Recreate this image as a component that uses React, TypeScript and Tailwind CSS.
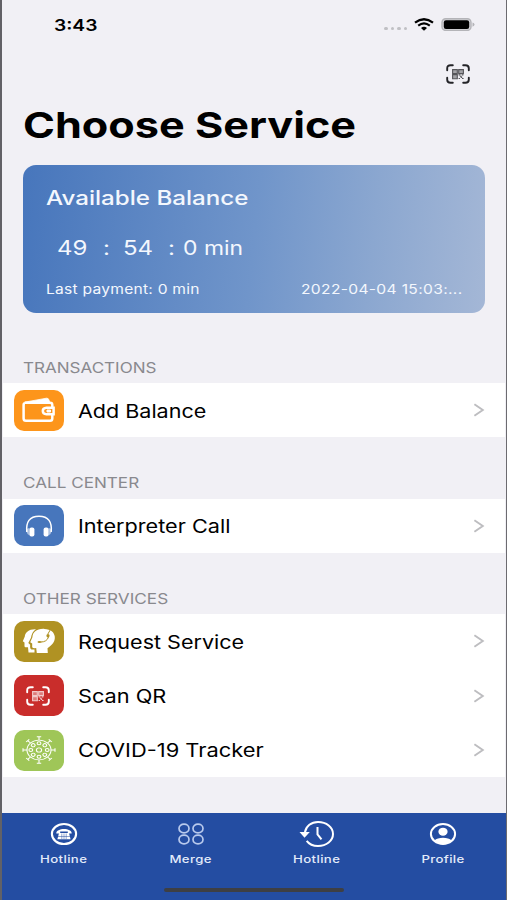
import type { ReactNode } from "react";

interface WideTextProps {
  children: ReactNode;
  className?: string;
}

// The whole screen uses slightly extended lettering
function WideText({ children, className = "" }: WideTextProps) {
  return (
    <span className={`block w-max origin-left whitespace-pre ${className}`}>
      {children}
    </span>
  );
}

function QrIcon({ className = "" }: { className?: string }) {
  return (
    <svg viewBox="0 0 24 20" fill="none" stroke="currentColor" className={className}>
      <path
        d="M1.2 6.2V4.2Q1.2 1.2 4.6 1.2H6.8M17.2 1.2H19.4Q22.8 1.2 22.8 4.2V6.2M22.8 13.8V15.8Q22.8 18.8 19.4 18.8H17.2M6.8 18.8H4.6Q1.2 18.8 1.2 15.8V13.8"
        strokeWidth="1.9"
        strokeLinecap="round"
      />
      <g strokeWidth="1.1" opacity="0.75">
        <path d="M6.6 5.6H11.3V9.6H6.6ZM12.7 5.6H17.4V9.6H12.7ZM6.6 10.8H11.3V14.7H6.6Z" fill="currentColor" fillOpacity="0.5" />
        <path d="M12.6 10.9H14.4M15.8 10.9H17.4M13.8 12.3H15.6M12.6 14.5H14M16 14.5H17.6M14.7 13.4H16.2" />
      </g>
    </svg>
  );
}

function WalletIcon() {
  return (
    <svg viewBox="0 0 34 26" className="h-[26px] w-[34px]" fill="none" stroke="white">
      <path
        d="M3 6.2Q1.6 6.2 1.6 8V21.5Q1.6 23.8 4 23.8H28Q30.3 23.8 30.3 21.5V17.8M30.3 10V8Q30.3 5.8 28 5.8H3"
        strokeWidth="2.5"
      />
      <path d="M2.5 5.2L24.5 1.2Q26.5 1 27 3L27.8 5.8L5 6.4Z" fill="white" strokeWidth="0.8" />
      <path d="M31.6 10.8H24.5Q20.8 11 20.8 14Q20.8 17 24.5 17.2H31.6Z" fill="#fd951b" strokeWidth="2.5" />
      <path d="M25 13H28.5V15H25Z" fill="white" strokeWidth="1" />
    </svg>
  );
}

function HeadphonesIcon() {
  return (
    <svg viewBox="0 0 28 22" className="h-[22px] w-[28px]" fill="none" stroke="white">
      <path d="M1.8 17C.8 7 4.5 1.3 14 1.3S27.2 7 26.2 17" strokeWidth="1.5" />
      <path d="M1.2 14.5Q2.5 13 4.4 13V20Q2.8 20 2 18ZM26.8 14.5Q25.5 13 23.6 13V20Q25.2 20 26 18Z" fill="white" fillOpacity="0.55" stroke="none" />
      <rect x="4.4" y="12.4" width="5" height="9" rx="2" fill="white" stroke="none" />
      <rect x="18.6" y="12.4" width="5" height="9" rx="2" fill="white" stroke="none" />
    </svg>
  );
}

function HeadsIcon() {
  return (
    <svg viewBox="0 0 34 26" className="h-[26px] w-[34px]">
      <path
        d="M14 1.2C7 .8 3.2 4.2 2.8 8.5L.8 13.2L2.5 14.4V18.5Q3 19.6 6 19.3L6.5 24.6H12.5V21.5H9.5Q7.7 21 8.2 16.8L6.3 15L9 9.8C9.4 6 11.2 3 14 1.2Z"
        fill="white"
      />
      <path
        d="M22.5.9C14.5.5 10.7 4.2 10.4 9.3L8.2 14.2L10.2 15.6V19.2Q11 20.5 14.2 20L14.8 24.9H25.8L25.5 20.2C30 17.3 33.2 13.6 32.8 8.8C32.3 4 28.6 1.2 22.5.9Z"
        fill="white"
      />
      <path d="M28.6 1.3L25.7 6.3M26.5 9C25.5 12.4 22.5 14 19 14" stroke="#b09223" strokeWidth="1" fill="none" />
      <ellipse cx="26" cy="7.8" rx="1.6" ry="1.7" fill="#b09223" />
      <ellipse cx="17.5" cy="14" rx="2" ry="1.1" fill="#b09223" />
    </svg>
  );
}

function VirusIcon() {
  const angles = [0, 45, 90, 135, 180, 225, 270, 315];
  return (
    <svg
      viewBox="-17 -17 34 34"
      preserveAspectRatio="none"
      className="h-[28px] w-[34px]"
      fill="none"
      stroke="white"
      strokeWidth="1.1"
    >
      <circle r="12" />
      <circle r="2.6" />
      {angles.map((a) => (
        <g key={a} transform={`rotate(${a})`}>
          <path d="M0 -12V-16M-2.2 -16H2.2" />
          <circle cy="-8.2" r="1.9" />
        </g>
      ))}
    </svg>
  );
}

function Chevron() {
  return (
    <svg viewBox="0 0 12 14" className="h-[14px] w-[12px]" fill="none" stroke="#bdbdc0" strokeWidth="1.9">
      <path d="M1.4 1.2L9.8 7L1.4 12.8" />
    </svg>
  );
}

function StatusBar() {
  return (
    <div className="flex h-[49px] items-center justify-between pl-[51.5px] pr-[31px]">
      <WideText className="scale-x-[1.2] text-[16px] font-semibold">3:43</WideText>
      <div className="flex items-center">
        <div className="mr-[7px] mt-[8px] flex gap-[3px]">
          <i className="h-[3px] w-[3.5px] rounded-full bg-[#c0c0c4]" />
          <i className="h-[3px] w-[3.5px] rounded-full bg-[#c0c0c4]" />
          <i className="h-[3px] w-[3.5px] rounded-full bg-[#c0c0c4]" />
          <i className="h-[3px] w-[3.5px] rounded-full bg-[#c0c0c4]" />
        </div>
        <svg viewBox="0 0 20 13" className="mr-[7px] h-[13px] w-[20px]" fill="none" stroke="black">
          <path d="M1 4.7Q10 -2.2 19 4.7" strokeWidth="2.2" />
          <path d="M4.2 7.7Q10 3.2 15.8 7.7" strokeWidth="2.1" />
          <path d="M7 9.9Q10 7.7 13 9.9L10 12.8Z" fill="black" stroke="none" />
        </svg>
        <svg viewBox="0 0 34 13" className="h-[13px] w-[34px]">
          <rect x="1" y=".8" width="29" height="11.6" rx="3.6" fill="#d5d4d9" stroke="#b4b4b8" strokeWidth="1.4" />
          <rect x="2.8" y="2.3" width="25.4" height="8.6" rx="2.2" fill="black" />
          <path d="M31.5 4.5Q33.5 5 33.5 6.6T31.5 8.8Z" fill="#b4b4b8" />
        </svg>
      </div>
    </div>
  );
}

function BalanceCard() {
  return (
    <div className="mr-[21px] ml-[20.5px] h-[148px] rounded-[13px] bg-[linear-gradient(96deg,#4776bc_0%,#7095ca_50%,#8ba7d0_75%,#a4b7d6_100%)] px-[23.5px] pt-[19px] text-[#f3f7fd]">
      <WideText className="scale-x-[1.207] text-[20px] leading-[28px] font-medium">
        Available Balance
      </WideText>
      <div className="mt-[22px] flex pl-[11px] text-[20px] leading-[28px]">
        <div className="w-[46px]"><WideText className="scale-x-[1.2]">49</WideText></div>
        <div className="w-[20px]"><WideText className="scale-x-[1.2]">:</WideText></div>
        <div className="w-[45px]"><WideText className="scale-x-[1.2]">54</WideText></div>
        <div className="w-[14.5px]"><WideText className="scale-x-[1.2]">:</WideText></div>
        <WideText className="scale-x-[1.145]">0 min</WideText>
      </div>
      <div className="mt-[17px] flex text-[13px] leading-[20px]">
        <div className="w-[255px]">
          <WideText className="scale-x-[1.2] tracking-[0.2px]">Last payment: 0 min</WideText>
        </div>
        <WideText className="scale-x-[1.2] tracking-[0.28px]">2022-04-04 15:03:...</WideText>
      </div>
    </div>
  );
}

interface ServiceRowProps {
  icon: ReactNode;
  color: string;
  label: string;
  stretch: string;
}

function ServiceRow({ icon, color, label, stretch }: ServiceRowProps) {
  return (
    <div className="flex h-[54.4px] items-center bg-white pr-[20px] pl-[11.4px]">
      <div className={`flex h-[41px] w-[50px] items-center justify-center rounded-[10px] ${color}`}>
        {icon}
      </div>
      <div className="ml-[13.7px] flex-1 pt-[2.5px]">
        <WideText className={`text-[18.5px] ${stretch}`}>{label}</WideText>
      </div>
      <Chevron />
    </div>
  );
}

function SectionTitle({ label, stretch }: { label: string; stretch: string }) {
  return (
    <div className="flex h-[61.1px] items-end pb-[5.5px] pl-[19.5px]">
      <WideText className={`text-[14.5px] leading-[20px] text-[#89898e] ${stretch}`}>{label}</WideText>
    </div>
  );
}

function Tab({ icon, label }: { icon: ReactNode; label: string }) {
  return (
    <div className="flex w-[126.4px] flex-col items-center">
      <div className="flex h-[30px] items-center">{icon}</div>
      <span className="mt-[2px] block scale-x-[1.2] text-[11px] leading-[16px] font-medium tracking-[0.3px] whitespace-nowrap text-[#e3ebfa]">
        {label}
      </span>
    </div>
  );
}

function TabBar() {
  return (
    <nav className="h-[87px] bg-[#244da2] pt-[6px]">
      <div className="-ml-[1px] flex">
        <Tab
          label="Hotline"
          icon={
            <svg viewBox="0 0 28 24" className="h-[24px] w-[28px]" fill="none" stroke="white">
              <ellipse cx="14" cy="12" rx="12.1" ry="10" strokeWidth="2.1" />
              <path d="M6.3 11.4C5.8 5.4 22.2 5.4 21.7 11.4L17.8 11.6V9.5H10.2V11.6Z" fill="white" stroke="none" />
              <path d="M9 11H19L20.6 17.2H7.4Z" fill="white" stroke="none" />
              <path d="M11.8 11.5V17M14 11.5V17M16.2 11.5V17M8 14.5H20" stroke="#244da2" strokeWidth=".5" />
            </svg>
          }
        />
        <Tab
          label="Merge"
          icon={
            <svg viewBox="0 0 26 22" className="ml-[2px] h-[22px] w-[26px]" fill="none" stroke="#b9caed" strokeWidth="1.7">
              <ellipse cx="6" cy="5.5" rx="5" ry="4.3" />
              <ellipse cx="20" cy="5.5" rx="5" ry="4.3" />
              <ellipse cx="6" cy="16.5" rx="5" ry="4.3" />
              <ellipse cx="20" cy="16.5" rx="5" ry="4.3" />
            </svg>
          }
        />
        <Tab
          label="Hotline"
          icon={
            <svg viewBox="0 0 36 28" className="ml-[1px] h-[28px] w-[36px]" fill="none" stroke="white" strokeWidth="2">
              <path d="M6 12.2C7 6 12.3 2 19 2C27.5 2 34 7.3 34 14S27.5 26 19 26C14.3 26 10.2 24.2 7.7 20.8" />
              <path d="M.5 12H10.8L5.5 17.8Z" fill="white" stroke="none" />
              <path d="M18.5 7V14.5L22.5 19.3" />
            </svg>
          }
        />
        <Tab
          label="Profile"
          icon={
            <svg viewBox="0 0 28 24" className="ml-[1px] h-[24px] w-[28px]" fill="none">
              <ellipse cx="14" cy="12" rx="12.1" ry="10" stroke="white" strokeWidth="2" />
              <ellipse cx="14" cy="9.7" rx="4.6" ry="4" fill="white" />
              <path d="M5.5 18.5C8.5 14.9 19.5 14.9 22.5 18.5Q19 22 14 22T5.5 18.5Z" fill="white" />
            </svg>
          }
        />
      </div>
      <div className="mx-auto mt-[20.5px] h-[4.5px] w-[180px] rounded-full bg-[#3e3f43]" />
    </nav>
  );
}

export default function App() {
  return (
    <div className="flex h-[900px] w-[507px] flex-col overflow-hidden border-r border-l-2 border-r-[#6c6b70] border-l-[#626166] bg-[#f1f0f5] font-['Inter','Liberation_Sans',sans-serif] text-black">
      <StatusBar />
      <div className="flex h-[49px] items-center justify-end pr-[36px]">
        <QrIcon className="h-[20px] w-[24px] text-[#232327]" />
      </div>
      <h1 className="h-[67px] pt-[5px] pl-[21px]">
        <WideText className="scale-x-[1.2] text-[36px] leading-[44px] font-bold">Choose Service</WideText>
      </h1>
      <BalanceCard />
      <div className="h-[9px]" />
      <main className="mr-px ml-px flex-1">
        <SectionTitle label="TRANSACTIONS" stretch="scale-x-[1.175]" />
        <ServiceRow icon={<WalletIcon />} color="bg-[#fd951b]" label="Add Balance" stretch="scale-x-[1.163]" />
        <SectionTitle label="CALL CENTER" stretch="scale-x-[1.18]" />
        <ServiceRow icon={<HeadphonesIcon />} color="bg-[#4776bc]" label="Interpreter Call" stretch="scale-x-[1.17]" />
        <SectionTitle label="OTHER SERVICES" stretch="scale-x-[1.185]" />
        <ServiceRow icon={<HeadsIcon />} color="bg-[#b09223]" label="Request Service" stretch="scale-x-[1.165]" />
        <ServiceRow
          icon={<QrIcon className="mr-[3px] h-[20px] w-[24px] text-white" />}
          color="bg-[#c92d2b]"
          label="Scan QR"
          stretch="scale-x-[1.175]"
        />
        <ServiceRow icon={<VirusIcon />} color="bg-[#9fc658]" label="COVID-19 Tracker" stretch="scale-x-[1.182]" />
      </main>
      <TabBar />
    </div>
  );
}
